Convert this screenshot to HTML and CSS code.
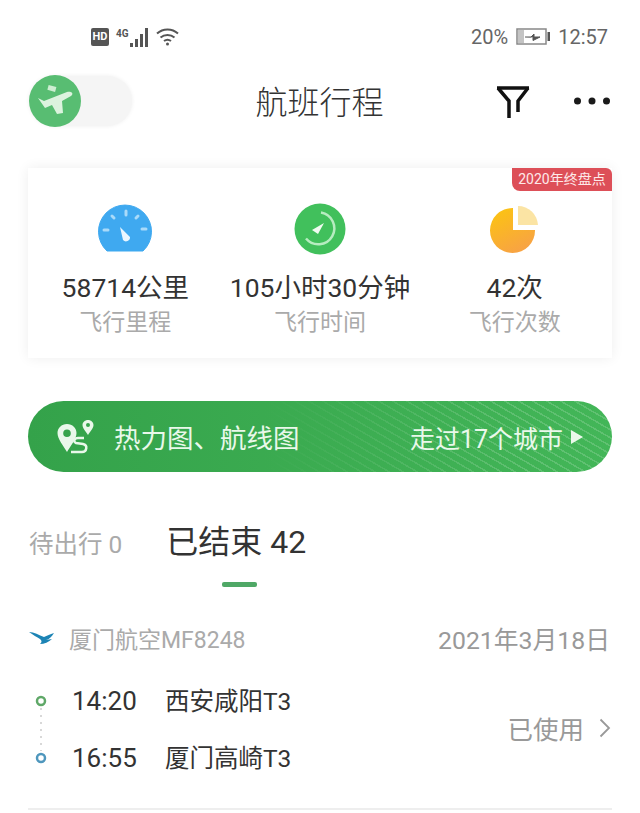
FILE: index.html
```html
<!DOCTYPE html>
<html lang="zh-CN">
<head>
<meta charset="UTF-8">
<meta name="viewport" content="width=device-width, initial-scale=1.0">
<title>航班行程</title>
<link rel="stylesheet" href="styles.css">
</head>
<body>
<div class="page">

  <div class="status-bar">
    <div class="status-left">
      <span class="hd">HD</span>
      <span class="net">4G</span>
      <svg class="signal" width="20" height="20" viewBox="0 0 20 20">
        <rect x="0" y="16" width="3" height="4" fill="#555"/>
        <rect x="5" y="12" width="3" height="8" fill="#555"/>
        <rect x="10" y="7" width="3" height="13" fill="#555"/>
        <rect x="15" y="1" width="3" height="19" fill="#555"/>
      </svg>
      <svg class="wifi" width="24" height="20" viewBox="0 0 24 20" fill="none" stroke="#555" stroke-width="2">
        <path d="M1 6.5C7 1 16 1 22 6.5"/>
        <path d="M4.5 10.5C8.500 7 14.500 7 18.500 10.500"/>
        <path d="M8 14C10 12.500 13 12.500 15 14"/>
        <circle cx="11.500" cy="17" r="1.500" fill="#555" stroke="none"/>
      </svg>
    </div>
    <div class="status-right">
      <span>20%</span>
      <svg class="battery" width="34" height="18" viewBox="0 0 34 18" fill="none">
        <rect x="1" y="1" width="29" height="15" fill="#fff" stroke="#888" stroke-width="1.500"/>
        <rect x="2" y="2" width="6" height="13" fill="#c4c4c4"/>
        <path d="M9 9H15L18 6V9H24L17 12.500V9.500" fill="#555" stroke="#555"/>
        <rect x="31.500" y="4" width="2.500" height="9" fill="#555"/>
      </svg>
      <span>12:57</span>
    </div>
  </div>

  <div class="header">
    <div class="toggle">
      <div class="knob">
        <svg width="40" height="40" viewBox="0 0 40 40">
          <path d="M3 17L9 20L32 11C37 10 39 13 36 15L27 20L28 32L22 33L17 24L10 27Z" fill="#dcf3de"/>
          <rect x="13" y="5" width="8" height="5" fill="#cdeed2" transform="rotate(15 17 7)"/>
        </svg>
      </div>
    </div>
    <h1 class="title">航班行程</h1>
    <div class="header-actions">
      <svg width="34" height="33" viewBox="0 0 34 33" fill="none" stroke="#111" stroke-width="3.500">
        <path d="M1 3H33"/>
        <path d="M2 3L13 16V33"/>
        <path d="M32 3L22 16V27"/>
      </svg>
      <svg width="36" height="8" viewBox="0 0 36 8" fill="#1a1a1a">
        <circle cx="3.500" cy="4" r="3.500"/>
        <circle cx="18" cy="4" r="3.500"/>
        <circle cx="32.500" cy="4" r="3.500"/>
      </svg>
    </div>
  </div>

  <div class="summary-card">
    <span class="badge">2020年终盘点</span>
    <div class="stat">
      <svg class="stat-icon" width="54" height="52" viewBox="0 0 54 52">
        <path d="M9 48A26.500 26.500 0 1 1 45 48Z" fill="#3fa9f0" stroke="#3fa9f0" stroke-linejoin="round"/>
        <g stroke="#a9daf9" stroke-width="3" stroke-linecap="round">
          <path d="M6 27H10"/>
          <path d="M14 13L16 15"/>
          <path d="M28 8V12"/>
          <path d="M40 13L38 15"/>
          <path d="M48 26H44"/>
        </g>
        <path d="M22 24L32 34A4 4 0 0 1 25 37Z" fill="#eaf6ff"/>
      </svg>
      <div class="stat-value">58714公里</div>
      <div class="stat-label">飞行里程</div>
    </div>
    <div class="stat">
      <svg class="stat-icon" width="54" height="52" viewBox="0 0 54 52">
        <circle cx="27" cy="26" r="25.500" fill="#41c05c"/>
        <path d="M28 9.500A16 16 0 1 1 13 35.500" fill="none" stroke="#b6ecc0" stroke-width="2.500"/>
        <path d="M31 20L25 31L19 27Z" fill="#f0fbf1"/>
      </svg>
      <div class="stat-value">105小时30分钟</div>
      <div class="stat-label">飞行时间</div>
    </div>
    <div class="stat">
      <svg class="stat-icon" width="54" height="52" viewBox="0 0 54 52">
        <defs>
          <linearGradient id="pieFill" x1="0" y1="0" x2="0.500" y2="1">
            <stop offset="0" stop-color="#fcc60e"/>
            <stop offset="1" stop-color="#f8a442"/>
          </linearGradient>
        </defs>
        <path d="M25 5A22.500 22.500 0 1 0 47 27H25Z" fill="url(#pieFill)"/>
        <path d="M30 3A20 20 0 0 1 50 22H30Z" fill="#fbe4a4"/>
      </svg>
      <div class="stat-value">42次</div>
      <div class="stat-label">飞行次数</div>
    </div>
  </div>

  <div class="map-banner">
    <div class="map-banner-left">
      <svg width="38" height="34" viewBox="0 0 38 34" fill="none">
        <path fill-rule="evenodd" d="M10 4C4.500 4 0.500 8 0.500 13C0.500 19 6 25 10 32C14 25 19.500 19 19.500 13C19.500 8 15.500 4 10 4ZM10 9.500A3.800 3.800 0 1 1 10 17.100A3.800 3.800 0 0 1 10 9.500Z" fill="#e9f8ea"/>
        <path fill-rule="evenodd" d="M31 0C28 0 25.500 2.300 25.500 5C25.500 8 29 12 31 15C33 12 36.500 8 36.500 5C36.500 2.300 34 0 31 0ZM31 3A2 2 0 1 1 31 7A2 2 0 0 1 31 3Z" fill="#e9f8ea"/>
        <path d="M14 32H25C30 32 31 25 26 24L19 23C16 22 17 18 21 18H27" stroke="#e9f8ea" stroke-width="2.500"/>
      </svg>
      <span>热力图、航线图</span>
    </div>
    <div class="map-banner-right">
      <span>走过17个城市</span>
      <span class="triangle"></span>
    </div>
  </div>

  <div class="tabs">
    <div class="tab">待出行 0</div>
    <div class="tab tab-active">
      <span>已结束 42</span>
      <span class="tab-line"></span>
    </div>
  </div>

  <div class="flight">
    <div class="flight-head">
      <div class="airline">
        <svg width="25" height="14" viewBox="0 0 25 14">
          <path d="M0 1C5 1 10 4 15 6C18 5 21 3 25 2C23 5 21 8 17 9L23 8C20 11 15 13 11 13C13 11 13 10 11 8C8 6 4 4 0 1Z" fill="#1c84b5"/>
        </svg>
        <span>厦门航空MF8248</span>
      </div>
      <div class="flight-date">2021年3月18日</div>
    </div>
    <div class="flight-body">
      <svg class="timeline" width="12" height="70" viewBox="0 0 12 70" fill="none">
        <circle cx="6" cy="6" r="4" stroke="#5fa868" stroke-width="2.500"/>
        <path d="M6 13V56" stroke="#ccc" stroke-width="1.500" stroke-dasharray="2 5"/>
        <circle cx="6" cy="63" r="4" stroke="#4f97bd" stroke-width="2.500"/>
      </svg>
      <div class="legs">
        <div class="leg"><span class="leg-time">14:20</span><span>西安咸阳T3</span></div>
        <div class="leg"><span class="leg-time">16:55</span><span>厦门高崎T3</span></div>
      </div>
      <div class="flight-status">
        <span>已使用</span>
        <svg width="12" height="20" viewBox="0 0 12 20" fill="none" stroke="#999" stroke-width="1.800">
          <path d="M1.500 1.500L10 10L1.500 18.500"/>
        </svg>
      </div>
    </div>
  </div>

</div>
</body>
</html>
```

FILE: styles.css
```css
body {
  font-family: Roboto, "Noto Sans CJK SC", sans-serif;
  margin: 0;
  padding: 0;
  background-color: #fff;
  color: #333;
}

.page {
  width: 640px;
  height: 813px;
  overflow: hidden;
}

/* status bar */
.status-bar {
  height: 74px;
  padding: 0 32px 0 91px;
  display: flex;
  justify-content: space-between;
  align-items: center;
  color: #666;
  font-size: 20px;
}

.status-left {
  display: flex;
  align-items: center;
}

.hd {
  width: 18px;
  height: 18px;
  background-color: #555;
  color: #fff;
  font-size: 11px;
  font-weight: 700;
  line-height: 18px;
  text-align: center;
  border-radius: 2px;
}

.net {
  margin-left: 7px;
  margin-top: -8px;
  font-size: 10px;
  font-weight: 700;
  color: #555;
}

.signal {
  margin-left: 1px;
}

.wifi {
  margin-left: 6px;
}

.status-right {
  display: flex;
  align-items: center;
  gap: 8px;
}

/* header */
.header {
  height: 54px;
  padding: 0 30px 0 29px;
  display: grid;
  grid-template-columns: 1fr auto 1fr;
  align-items: center;
}

.toggle {
  width: 103px;
  height: 50px;
  border-radius: 26px;
  background-color: #f5f5f5;
  box-shadow: 0 0 4px #eee;
  display: flex;
  align-items: center;
}

.knob {
  width: 52px;
  height: 52px;
  border-radius: 50%;
  background-color: #58bd72;
  display: flex;
  align-items: center;
  justify-content: center;
  flex-shrink: 0;
}

.title {
  margin: 0 0 3px;
  font-size: 32px;
  font-weight: 300;
  color: #333;
}

.header-actions {
  display: flex;
  justify-content: flex-end;
  align-items: center;
  gap: 44px;
}

/* summary card */
.summary-card {
  position: relative;
  margin: 40px 28px 0;
  height: 190px;
  display: grid;
  grid-template-columns: repeat(3, 1fr);
  background-color: #fff;
  box-shadow: 0 0 12px #eee;
}

.badge {
  position: absolute;
  top: 0;
  right: 0;
  width: 100px;
  height: 23px;
  background-color: #dd4f58;
  color: #fde9e9;
  font-size: 14px;
  line-height: 23px;
  text-align: center;
  border-radius: 0 6px 0 8px;
}

.stat {
  padding-top: 35px;
  display: flex;
  flex-direction: column;
  align-items: center;
}

.stat-icon {
  display: block;
}

.stat-value {
  margin-top: 15px;
  font-size: 26.500px;
  line-height: 36px;
  color: #333;
  white-space: nowrap;
}

.stat-label {
  margin-top: 1px;
  font-size: 23px;
  line-height: 32px;
  color: #aaa;
}

/* map banner */
.map-banner {
  position: relative;
  overflow: hidden;
  margin: 43px 28px 0;
  height: 71px;
  padding: 0 29px;
  display: flex;
  justify-content: space-between;
  align-items: center;
  border-radius: 36px;
  background: linear-gradient(to right, #34a24a, #43b658);
  color: #e9f8ea;
}

.map-banner::after {
  content: "";
  position: absolute;
  top: 0;
  bottom: 0;
  right: 0;
  width: 60%;
  background: repeating-linear-gradient(30deg, rgba(255, 255, 255, 0.16) 0, rgba(255, 255, 255, 0.16) 1.500px, transparent 1.500px, transparent 7px);
  -webkit-mask-image: linear-gradient(to right, transparent, #000 70%);
  mask-image: linear-gradient(to right, transparent, #000 70%);
}

.map-banner-left {
  display: flex;
  align-items: center;
  gap: 19px;
  font-size: 26.500px;
}

.map-banner-right {
  display: flex;
  align-items: center;
  gap: 8px;
  font-size: 25px;
}

.triangle {
  width: 0;
  height: 0;
  border-left: 12px solid #e9f8ea;
  border-top: 7px solid transparent;
  border-bottom: 7px solid transparent;
}

/* tabs */
.tabs {
  padding: 48px 0 0 29px;
  display: flex;
  align-items: baseline;
  gap: 44px;
}

.tab {
  font-size: 24.500px;
  color: #aaa;
}

.tab-active {
  display: flex;
  flex-direction: column;
  align-items: center;
  font-size: 32px;
  line-height: 44px;
  color: #333;
}

.tab-line {
  width: 35px;
  height: 5px;
  margin: 18px 0 0 6px;
  border-radius: 2px;
  background-color: #4fa866;
}

/* flight */
.flight {
  margin: 36px 28px 0;
  border-bottom: 2px solid #eee;
}

.flight-head {
  height: 30px;
  display: flex;
  justify-content: space-between;
  align-items: center;
}

.airline {
  display: flex;
  align-items: center;
  gap: 15px;
  padding-left: 1px;
  font-size: 23px;
  color: #aaa;
}

.flight-date {
  padding-right: 2px;
  font-size: 24.800px;
  color: #999;
}

.flight-body {
  margin: 33px 0 35px;
  padding-left: 7px;
  display: flex;
  align-items: center;
}

.legs {
  margin-left: 25px;
  display: flex;
  flex-direction: column;
  gap: 27px;
}

.leg {
  height: 30px;
  display: flex;
  align-items: baseline;
  font-size: 24.500px;
  line-height: 30px;
  color: #333;
}

.leg-time {
  width: 93px;
  font-size: 26px;
}

.flight-status {
  margin-left: auto;
  display: flex;
  align-items: center;
  gap: 15px;
  padding: 0 1px 4px 0;
  font-size: 25.500px;
  color: #999;
}
```
